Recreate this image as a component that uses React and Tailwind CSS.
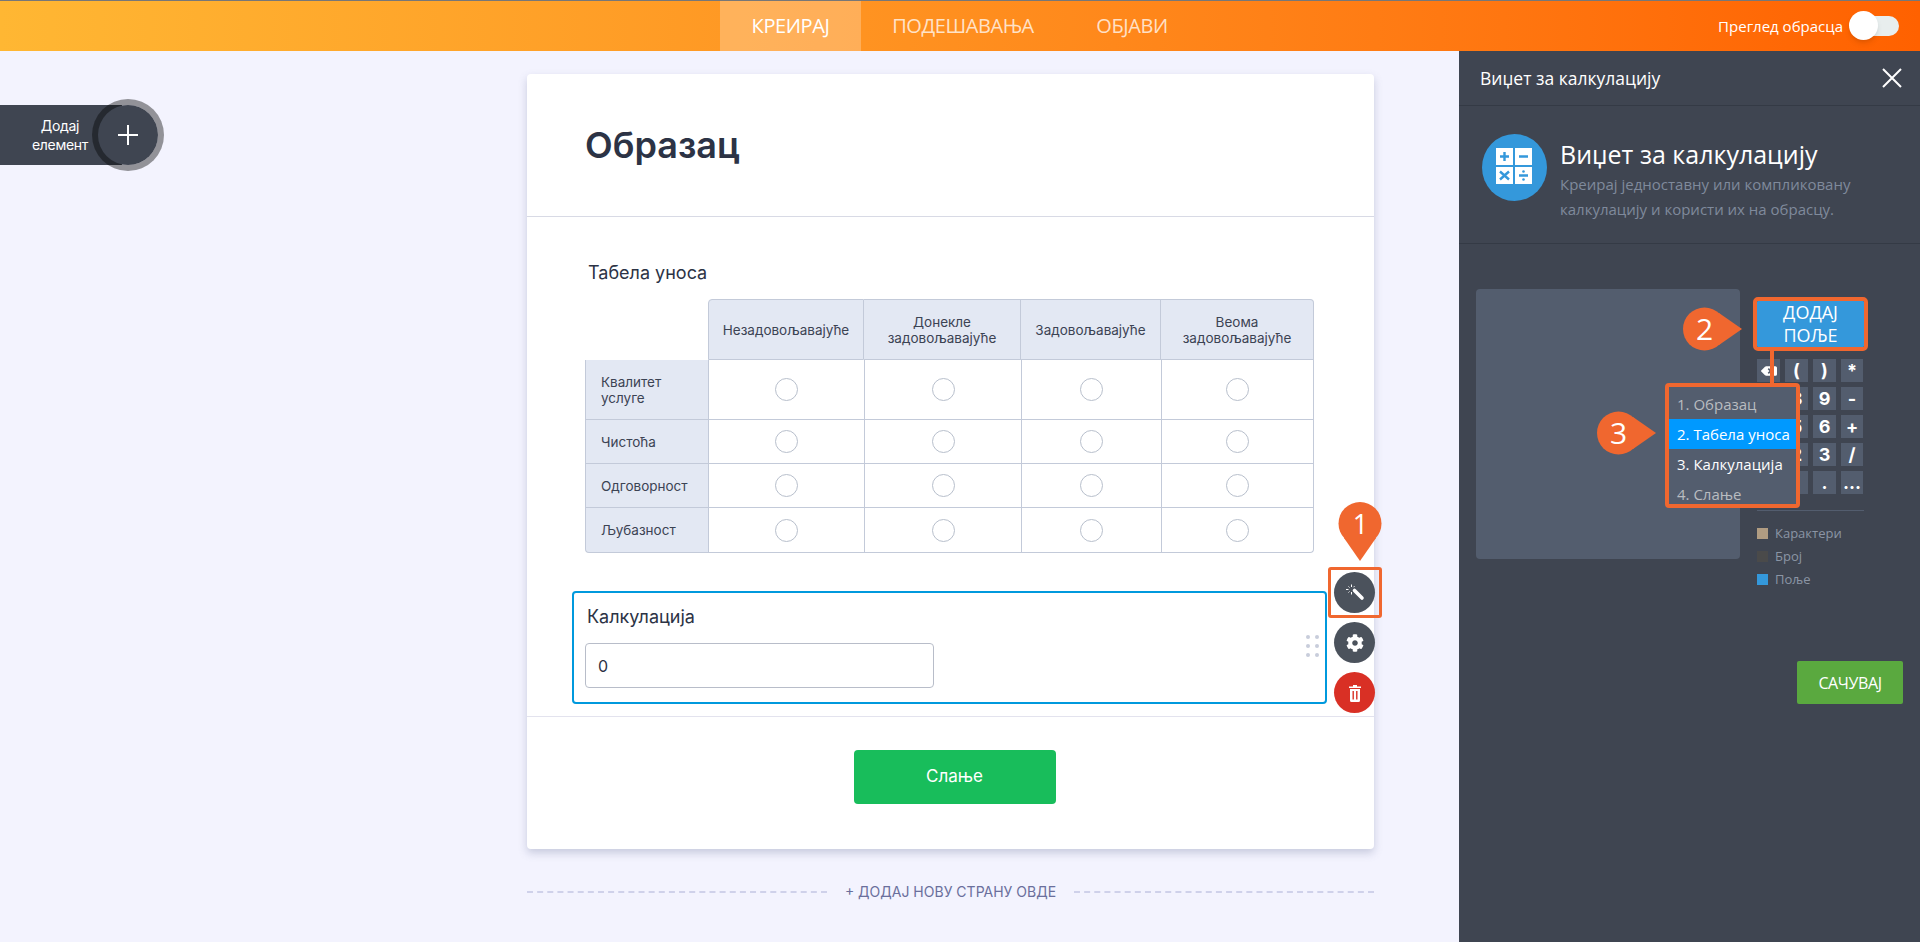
import React from 'react';
import { FaCog, FaBackspace } from 'react-icons/fa';

const inter = "font-['Inter',sans-serif]";
const openSans = "font-['Open_Sans',sans-serif]";

const columns = ['Незадовољавајуће', 'Донекле задовољавајуће', 'Задовољавајуће', 'Веома задовољавајуће'];
const rows = [
  { label: 'Квалитет услуге', height: 'h-[60px]' },
  { label: 'Чистоћа', height: 'h-[44px]' },
  { label: 'Одговорност', height: 'h-[44px]' },
  { label: 'Љубазност', height: 'h-[45px]' },
];
const keys = ['back', '(', ')', '*', '7', '8', '9', '-', '4', '5', '6', '+', '1', '2', '3', '/', '0', '', '.', '...'];
const steps = [
  { text: '1. Образац', cls: 'text-[#b9bcc0]' },
  { text: '2. Табела уноса', cls: 'bg-[#0099ff] text-white' },
  { text: '3. Калкулација', cls: 'text-white' },
  { text: '4. Слање', cls: 'text-[#b9bcc0]' },
];
const legend = [
  { text: 'Карактери', color: 'bg-[#b09c82]' },
  { text: 'Број', color: 'bg-[#4a4a4a]' },
  { text: 'Поље', color: 'bg-[#3498db]' },
];

// orange numbered marker, the tip points where the callout says
const Pin = ({ n, dir, className }) => (
  <div className={`absolute w-[60px] h-[60px] ${className}`}>
    <svg width="60" height="60" viewBox="0 0 60 60">
      {dir === 'down' ? (
        <>
          <circle cx="30" cy="21.5" r="21.5" fill="#f0672f" />
          <path d="M14 36L30 59L46 36Z" fill="#f0672f" />
        </>
      ) : (
        <>
          <circle cx="21.5" cy="30" r="21.5" fill="#f0672f" />
          <path d="M36 14L59 30L36 46Z" fill="#f0672f" />
        </>
      )}
    </svg>
    <span
      className={`absolute w-[43px] h-[43px] flex items-center justify-center text-white leading-none font-['Open_Sans',sans-serif] ${
        dir === 'down' ? 'left-[9px] top-0 text-[27px]' : 'left-0 top-[8px] text-[30px]'
      }`}
    >
      {n}
    </span>
  </div>
);

const CalcIcon = () => (
  <svg width="65" height="67" viewBox="0 0 65 67" className="shrink-0">
    <ellipse cx="32.5" cy="33.5" rx="32.5" ry="33.5" fill="#3498db" />
    <rect x="14" y="14" width="17" height="17" fill="#fff" />
    <rect x="33" y="14" width="17" height="17" fill="#fff" />
    <rect x="14" y="33" width="17" height="17" fill="#fff" />
    <rect x="33" y="33" width="17" height="17" fill="#fff" />
    <path d="M18 22.5h9M22.5 18v9M37 22.5h9M18 37.5l9 8M27 37.5l-9 8M37 41.5h9" stroke="#3498db" strokeWidth="2.4" />
    <circle cx="41.5" cy="37.5" r="1.3" fill="#3498db" />
    <circle cx="41.5" cy="45.5" r="1.3" fill="#3498db" />
  </svg>
);

const WandIcon = () => (
  <svg width="20" height="20" viewBox="0 0 20 20">
    <path d="M9.5 7.5L17 15" stroke="#fff" strokeWidth="3.6" strokeLinecap="round" />
    <path d="M6.5 1.5v2.5M6.5 9v2.5M1 6.5h2.5M9.5 3.2l-1 1M3.5 3.5l1 1M3.5 9.5l1-1" stroke="#fff" strokeWidth="1" />
  </svg>
);

const TrashIcon = () => (
  <svg width="12" height="18" viewBox="0 0 12 18">
    <path d="M0 2.5h4V1h4v1.5h4V4H0ZM1 5h10v11.5a1.5 1.5 0 0 1-1.5 1.5h-7A1.5 1.5 0 0 1 1 16.5Z" fill="#fff" />
    <path d="M4.2 7v8.5M7.8 7v8.5" stroke="#d93025" strokeWidth="1.4" />
  </svg>
);

export default function App() {
  return (
    <div className={`h-[942px] w-[1920px] overflow-hidden flex flex-col bg-[#f3f3fe] ${inter}`}>
      {/* top bar */}
      <header className="h-[51px] shrink-0 border-t border-[#777] bg-gradient-to-r from-[#ffb733] to-[#ff6100] flex items-center relative">
        <nav className={`flex h-full ml-[720px] text-[20px] tracking-[-0.4px] ${openSans}`}>
          <a className="h-full w-[141px] flex items-center justify-center bg-white/25 text-white">КРЕИРАЈ</a>
          <a className="h-full w-[204px] flex items-center justify-center text-white/75">ПОДЕШАВАЊА</a>
          <a className="h-full w-[134px] flex items-center justify-center text-white/75">ОБЈАВИ</a>
        </nav>
        <div className={`ml-auto mr-[21px] flex items-center gap-[7px] text-white text-[15px] ${openSans}`}>
          <span>Преглед обрасца</span>
          <div className="relative w-[49px] h-[20px] rounded-full bg-[#e8eeee]">
            <div className="absolute -left-[1px] -top-[5px] w-[29px] h-[29px] rounded-full bg-white shadow-md" />
          </div>
        </div>
      </header>

      <div className="flex-1 flex min-h-0">
        {/* builder canvas */}
        <main className="relative flex-1 pl-[527px] pr-[85px] pt-[23px]">
          <div className="absolute left-0 top-[48px] flex items-center">
            <div className="w-[122px] h-[60px] bg-[#3f4551] text-white text-[14px] leading-[19px] pr-[34px] flex items-center justify-end tracking-[-0.3px]">
              <span className="text-center">Додај<br />елемент</span>
            </div>
            <div className="-ml-[30px] w-[72px] h-[72px] rounded-full border-[6px] border-black/40 bg-clip-padding bg-[#3f4551] flex items-center justify-center text-white">
              <svg width="20" height="20" viewBox="0 0 20 20"><path d="M10 0v20M0 10h20" stroke="#fff" strokeWidth="2" /></svg>
            </div>
          </div>

          <section className="bg-white rounded-[4px] shadow-[0_4px_8px_rgba(100,110,150,0.3)] h-[775px]">
            <div className="h-[143px] border-b border-[#d8dae5] flex items-center pl-[58px]">
              <h1 className="text-[36px] font-semibold text-[#2c3345]">Образац</h1>
            </div>

            <div className="pt-[46px] pl-[58px] pr-[60px]">
              <div className="text-[18px] leading-[20px] text-[#2c3345] pl-[3px]">Табела уноса</div>
              <div className="mt-[16px] grid grid-cols-[123px_156px_157px_140px_153px] text-[13.5px] leading-[16px] text-[#3c4353]">
                <div />
                {columns.map((c, i) => (
                  <div
                    key={c}
                    className={`h-[61px] bg-[#e3e8f3] border-t border-r border-b border-[#c3cad9] flex items-center justify-center text-center px-2 ${
                      i === 0 ? 'border-l rounded-tl-[4px]' : ''
                    } ${i === 3 ? 'rounded-tr-[4px]' : ''}`}
                  >
                    {c}
                  </div>
                ))}
                {rows.map((r, ri) => (
                  <React.Fragment key={r.label}>
                    <div
                      className={`${r.height} bg-[#e3e8f3] border-l border-b border-[#c3cad9] flex items-center pl-[15px] pr-8 ${
                        ri === 3 ? 'rounded-bl-[4px]' : ''
                      }`}
                    >
                      {r.label}
                    </div>
                    {columns.map((c, ci) => (
                      <div
                        key={c}
                        className={`${r.height} border-l border-b border-[#c3cad9] flex items-center justify-center ${
                          ci === 3 ? 'border-r' : ''
                        } ${ri === 3 && ci === 3 ? 'rounded-br-[4px]' : ''}`}
                      >
                        <div className="w-[23px] h-[23px] rounded-full border border-[#b8bfcc] bg-white" />
                      </div>
                    ))}
                  </React.Fragment>
                ))}
              </div>
            </div>

            {/* selected widget */}
            <div className="relative mt-[38px] ml-[45px] mr-[47px] h-[113px] border-2 border-[#0099dd] rounded-[4px] pl-[11px]">
              <div className="pt-[13px] text-[18px] leading-[22px] text-[#2c3345] pl-[2px]">Калкулација</div>
              <div className="mt-[15px] w-[349px] h-[45px] rounded-[4px] border border-[#b8bdc9] flex items-center pl-[12px] text-[16px] text-[#2c3345]">0</div>
              <div className="absolute right-[6px] top-[42px] grid grid-cols-2 gap-x-[5px] gap-y-[5px]">
                {[0, 1, 2, 3, 4, 5].map((d) => (
                  <span key={d} className="w-[4px] h-[4px] rounded-full bg-[#c8cddb]" />
                ))}
              </div>
              <div className="absolute -right-[57px] -top-[26px] w-[54px] h-[51px] rounded-[3px] border-[3px] border-[#f0672f]" />
              <div className="absolute -right-[50px] -top-[21px] flex flex-col gap-[9px]">
                <button className="w-[41px] h-[41px] rounded-full bg-[#4b525c] flex items-center justify-center"><WandIcon /></button>
                <button className="w-[41px] h-[41px] rounded-full bg-[#4b525c] text-white flex items-center justify-center"><FaCog size={18} /></button>
                <button className="w-[41px] h-[41px] rounded-full bg-[#d93025] flex items-center justify-center"><TrashIcon /></button>
              </div>
              <Pin n="1" dir="down" className="-right-[65px] -top-[91px]" />
            </div>

            <div className="mt-[12px] border-t border-[#e3e3ee] pt-[33px] pl-[8px] flex justify-center">
              <button className="w-[202px] h-[54px] rounded-[4px] bg-[#18bd5b] text-white text-[17px]">Слање</button>
            </div>
          </section>

          <div className="mt-[32px] flex items-center gap-[18px] text-[14px] text-[#6a6f9c]">
            <div className="flex-1 border-t-2 border-dashed border-[#cfd1ea]" />
            <span>+ ДОДАЈ НОВУ СТРАНУ ОВДЕ</span>
            <div className="flex-1 border-t-2 border-dashed border-[#cfd1ea]" />
          </div>
        </main>

        {/* wizard panel */}
        <aside className={`w-[461px] shrink-0 bg-[#3f4551] text-white flex flex-col ${openSans}`}>
          <div className="h-[55px] shrink-0 border-b border-[#343a45] flex items-center justify-between pl-[21px] pr-[18px] text-[17.5px]">
            <span>Виџет за калкулацију</span>
            <svg width="20" height="20" viewBox="0 0 20 20"><path d="M1 1l18 18M19 1L1 19" stroke="#fff" strokeWidth="2" /></svg>
          </div>
          <div className="h-[138px] shrink-0 border-b border-[#343a45] flex items-start pl-[23px] pt-[28px] gap-[13px]">
            <CalcIcon />
            <div className="pt-[4px]">
              <div className="text-[25px] leading-[33px]">Виџет за калкулацију</div>
              <div className="text-[15px] leading-[25px] pt-[1px] text-[#7f8a9c]">
                Креирај једноставну или компликовану<br />калкулацију и користи их на обрасцу.
              </div>
            </div>
          </div>

          <div className="pt-[45px] pl-[17px] flex gap-[17px]">
            <div className="w-[264px] h-[270px] rounded-[4px] bg-[#535d6e]" />
            <div className="relative w-[107px] pt-[12px]">
              <div className="h-[46px] bg-[#3498db] outline-[4px] outline-[#f0672f] rounded-[1px] text-[18px] leading-[23px] text-center">ДОДАЈ<br />ПОЉЕ</div>
              <div className={`mt-[12px] grid grid-cols-[23px_23px_23px_22px] gap-x-[5px] gap-y-[5px] font-bold text-[18px] ${inter}`}>
                {keys.map((k, i) => (
                  <div key={i} className="h-[23px] bg-[#535d6e] flex items-center justify-center">
                    {k === 'back' ? <FaBackspace size={16} /> : k}
                  </div>
                ))}
              </div>
              <div className="mt-[16px] border-t border-[#535d6e]" />
              <div className="mt-[11px] flex flex-col text-[13px] leading-[23px] text-[#8b95a5]">
                {legend.map((l) => (
                  <div key={l.text} className="flex items-center gap-[7px]">
                    <span className={`w-[11px] h-[11px] ${l.color}`} />
                    {l.text}
                  </div>
                ))}
              </div>

              {/* callouts over the preview */}
              <div className="absolute left-[13px] top-[62px] w-[4px] h-[32px] bg-[#f0672f]" />
              <div className="absolute -left-[92px] top-[94px] w-[135px] h-[125px] border-[4px] border-[#f0672f] rounded-[4px] bg-[#535d6e] text-[15px] leading-[30px] pt-[2px] overflow-hidden whitespace-nowrap">
                {steps.map((s) => (
                  <div key={s.text} className={`h-[30px] pl-[8px] ${s.cls}`}>{s.text}</div>
                ))}
              </div>
              <Pin n="2" dir="right" className="-left-[74px] top-[10px]" />
              <Pin n="3" dir="right" className="-left-[160px] top-[114px]" />
            </div>
          </div>

          <div className="mt-[70px] pr-[17px] flex justify-end">
            <button className="w-[106px] h-[43px] rounded-[2px] bg-[#5aa93f] text-white text-[16px] tracking-[-0.4px]">САЧУВАЈ</button>
          </div>
        </aside>
      </div>
    </div>
  );
}
